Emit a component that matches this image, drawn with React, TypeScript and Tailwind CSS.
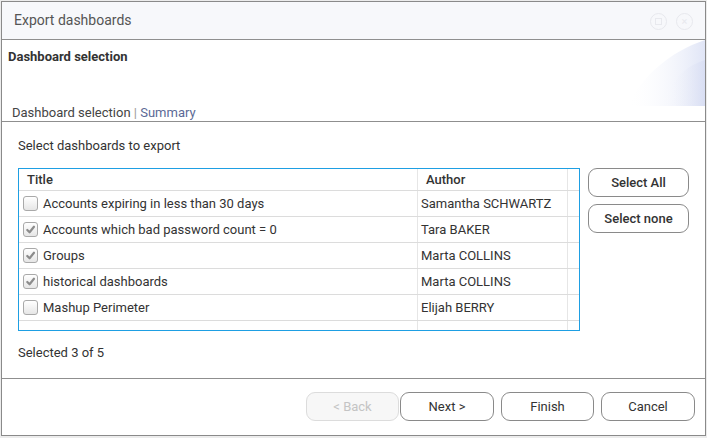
import React from 'react';

type Row = { title: string; author: string; checked: boolean };

const rows: Row[] = [
    { title: 'Accounts expiring in less than 30 days', author: 'Samantha SCHWARTZ', checked: false },
    { title: 'Accounts which bad password count = 0', author: 'Tara BAKER', checked: true },
    { title: 'Groups', author: 'Marta COLLINS', checked: true },
    { title: 'historical dashboards', author: 'Marta COLLINS', checked: true },
    { title: 'Mashup Perimeter', author: 'Elijah BERRY', checked: false },
];

const Checkbox: React.FC<{ checked: boolean }> = ({ checked }) => (
    <span className="w-[15px] h-[15px] rounded-[3px] border border-[#a9a9a9] bg-gradient-to-b from-[#ffffff] to-[#e6e6e6] flex items-center justify-center shrink-0">
        {checked && (
            <svg width="11" height="11" viewBox="0 0 12 12" fill="none" stroke="#8c8c8c" strokeWidth="2.4" strokeLinecap="round" strokeLinejoin="round">
                <polyline points="2.5 6.5 5 9 9.8 3" />
            </svg>
        )}
    </span>
);

const App: React.FC = () => {
    return (
        <div className="w-[707px] h-[438px] bg-[#ececec] pl-px pt-px overflow-hidden font-['Roboto',sans-serif]">
            <div className="w-[705px] h-[435px] border border-[#8a8a8a] bg-white flex flex-col">

                {/* Title bar */}
                <div className="h-[38px] bg-[#f7f8fb] border-b border-[#8f8f8f] flex items-center justify-between pl-[12px] pr-[12px] shrink-0">
                    <span className="text-[14px] text-[#555]">Export dashboards</span>
                    <div className="flex items-center gap-[9px] pt-[1px]">
                        <span className="w-[17px] h-[17px] rounded-full border border-[#e8e9ee] flex items-center justify-center">
                            <span className="w-[7px] h-[7px] border border-[#e8e9ee]"></span>
                        </span>
                        <span className="w-[17px] h-[17px] rounded-full border border-[#e8e9ee] flex items-center justify-center text-[#e8e9ee] text-[11px] leading-none">
                            ×
                        </span>
                    </div>
                </div>

                {/* Wizard header */}
                <div className="relative h-[82px] border-b border-[#8f8f8f] shrink-0 flex flex-col">
                    <svg className="absolute right-0 top-0 pointer-events-none" width="84" height="66" viewBox="0 0 84 66">
                        <defs>
                            <linearGradient id="g1" x1="0" y1="0" x2="1" y2="0">
                                <stop offset="0" stopColor="#ffffff" stopOpacity="0" />
                                <stop offset="1" stopColor="#e0e5f6" />
                            </linearGradient>
                            <linearGradient id="g2" x1="0" y1="0" x2="1" y2="0">
                                <stop offset="0" stopColor="#ffffff" stopOpacity="0" />
                                <stop offset="1" stopColor="#d5dbf2" />
                            </linearGradient>
                        </defs>
                        <path d="M6 66 C 22 36, 48 12, 84 0 L 84 66 Z" fill="url(#g1)" />
                        <path d="M40 66 C 50 40, 64 26, 84 20 L 84 66 Z" fill="url(#g2)" opacity="0.7" />
                    </svg>
                    <div className="pl-[6px] pt-[7px] text-[13px] font-bold text-[#333] relative">Dashboard selection</div>
                    <div className="mt-auto pl-[10px] pb-[-1px] text-[13px] leading-[17px] text-[#444] relative">
                        Dashboard selection <span className="text-[#999]">|</span> <span className="text-[#5b6a96]">Summary</span>
                    </div>
                </div>

                {/* Body */}
                <div className="flex-1 border-b border-[#8f8f8f] pl-[16px] pt-[15px] flex flex-col text-[#333]">
                    <div className="text-[13px] leading-[17px]">Select dashboards to export</div>
                    <div className="flex mt-[14px]">
                        <div className="w-[562px] h-[163px] border border-[#1e9fe3] flex flex-col overflow-hidden">
                            <div className="flex h-[22px] border-b border-[#dcdcdc] text-[13px] font-medium shrink-0">
                                <div className="w-[399px] border-r border-[#e6e6e6] pl-[8px] flex items-center">Title</div>
                                <div className="w-[150px] border-r border-[#e6e6e6] pl-[8px] flex items-center">Author</div>
                                <div className="flex-1"></div>
                            </div>
                            {rows.map((r) => (
                                <div key={r.title} className="flex h-[26px] border-b border-[#dcdcdc] text-[13px] shrink-0">
                                    <div className="w-[399px] border-r border-[#e6e6e6] pl-[4px] flex items-center gap-[5px]">
                                        <Checkbox checked={r.checked} />
                                        <span>{r.title}</span>
                                    </div>
                                    <div className="w-[150px] border-r border-[#e6e6e6] pl-[3px] flex items-center">{r.author}</div>
                                    <div className="flex-1"></div>
                                </div>
                            ))}
                            <div className="flex flex-1">
                                <div className="w-[399px] border-r border-[#e6e6e6]"></div>
                                <div className="w-[150px] border-r border-[#e6e6e6]"></div>
                            </div>
                        </div>
                        <div className="ml-[8px] flex flex-col gap-[7px]">
                            <button className="w-[101px] h-[29px] rounded-[9px] border border-[#8a8a8a] bg-white text-[13px] font-medium text-[#333]">Select All</button>
                            <button className="w-[101px] h-[29px] rounded-[9px] border border-[#8a8a8a] bg-white text-[13px] font-medium text-[#333]">Select none</button>
                        </div>
                    </div>
                    <div className="text-[13px] leading-[17px] mt-[13px]">Selected 3 of 5</div>
                </div>

                {/* Footer */}
                <div className="h-[56px] shrink-0 flex items-start justify-end pt-[13px] pr-[10px] text-[13px]">
                    <button disabled className="w-[93px] h-[29px] rounded-[9px] border border-[#dcdcdc] bg-[#f7f7f7] text-[#c4c4c4]">&lt; Back</button>
                    <button className="ml-[1px] w-[94px] h-[29px] rounded-[9px] border border-[#8a8a8a] bg-white text-[#333]">Next &gt;</button>
                    <button className="ml-[7px] w-[93px] h-[29px] rounded-[9px] border border-[#8a8a8a] bg-white text-[#333]">Finish</button>
                    <button className="ml-[7px] w-[94px] h-[29px] rounded-[9px] border border-[#8a8a8a] bg-white text-[#333]">Cancel</button>
                </div>
            </div>
        </div>
    );
};

export default App;
